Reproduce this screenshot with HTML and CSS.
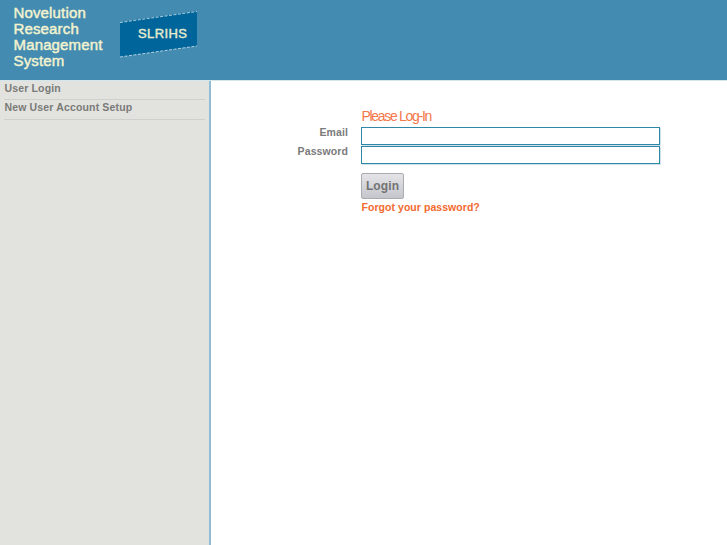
FILE: index.html
```html
<!DOCTYPE html>
<html lang="en">
<head>
<meta charset="utf-8">
<title>Novelution Research Management System</title>
<link rel="stylesheet" href="styles.css">
</head>
<body>
<header class="banner">
  <div class="brand">Novelution<br>Research<br>Management<br>System</div>
  <div class="logo">
    <svg class="logo-shape" width="78" height="47" viewBox="0 0 78 47" aria-hidden="true">
      <polygon points="0,11 77,0 77,35 0,46" fill="#00659b"/>
      <path d="M0 11.5 L77 0.5 M0 46 L77 35" stroke="#d8e8ee" stroke-width="1" stroke-dasharray="3 1.5" fill="none" opacity="0.8"/>
    </svg>
    <span class="logo-text">SLRIHS</span>
  </div>
</header>
<div class="body-row">
  <nav class="side">
    <a class="side-item first">User Login</a>
    <a class="side-item">New User Account Setup</a>
  </nav>
  <main class="main">
    <form class="form">
      <div class="title">Please Log-In</div>
      <div class="row"><label class="lbl">Email</label><input class="inp" type="text"></div>
      <div class="row"><label class="lbl">Password</label><input class="inp" type="password"></div>
      <button class="btn" type="button">Login</button>
      <a class="forgot">Forgot your password?</a>
    </form>
  </main>
</div>
</body>
</html>
```
FILE: styles.css
```css
* { box-sizing: border-box; }
html, body { margin: 0; height: 100%; }
body {
  display: flex;
  flex-direction: column;
  height: 545px;
  overflow: hidden;
  background: #fff;
  font-family: "Liberation Sans", sans-serif;
}
.banner {
  height: 81px;
  flex: none;
  background: #438bb0;
  border-bottom: 1px solid #d5e5ec;
  display: flex;
  padding: 5px 0 0 13.5px;
}
.brand {
  width: 106.5px;
  font-size: 15px;
  line-height: 16px;
  letter-spacing: 0.15px;
  color: #f3f3cf;
  -webkit-text-stroke: 0.45px #f3f3cf;
}
.logo {
  position: relative;
  width: 78px;
  height: 47px;
  margin-top: 6px;
}
.logo-shape { display: block; }
.logo-text {
  position: absolute;
  left: 18px;
  top: 15px;
  font-size: 13px;
  line-height: 16px;
  letter-spacing: 0.4px;
  color: #e8efcf;
  -webkit-text-stroke: 0.4px #e8efcf;
}
.body-row { flex: 1; display: flex; min-height: 0; }
.side {
  width: 211px;
  flex: none;
  background: #e2e3de;
  border-right: 2px solid #8fbdd3;
  padding: 0 4px 0 4px;
}
.side-item {
  display: block;
  height: 20px;
  padding-left: 0.5px;
  font-size: 10.5px;
  line-height: 15px;
  font-weight: 700;
  letter-spacing: 0.15px;
  color: #7a7a78;
  border-bottom: 1px solid #cfd0cb;
}
.side-item.first { height: 19px; }
.main { flex: 1; padding: 26px 0 0 0; }
.form { display: flex; flex-direction: column; padding-left: 150px; width: 449px; position: relative; }
.title {
  font-size: 14px;
  line-height: 18px;
  letter-spacing: -1.3px;
  color: #f4774a;
  padding-left: 0.5px;
  margin-bottom: 2px;
}
.row { position: relative; height: 18px; margin-bottom: 1px; }
.lbl {
  position: absolute;
  right: 100%;
  margin-right: 13px;
  top: -2px;
  font-size: 10.5px;
  line-height: 15px;
  font-weight: 700;
  letter-spacing: 0.1px;
  color: #7a7a7a;
  white-space: nowrap;
}
.inp {
  display: block;
  width: 299px;
  height: 18px;
  padding: 0;
  margin: 0;
  background: #fff;
  border: 1px solid #2f86a6;
  border-radius: 0;
  outline: none;
  box-shadow: 1px 1px 0 #cfe3ea;
}
.btn {
  align-self: flex-start;
  width: 43px;
  height: 26px;
  margin-top: 8px;
  padding: 0;
  border: 1px solid #a9abaf;
  border-radius: 2px;
  background: linear-gradient(#e4e4e8, #c5c6cc);
  font-family: "Liberation Sans", sans-serif;
  font-size: 12px;
  font-weight: 700;
  letter-spacing: 0.1px;
  color: #737373;
}
.forgot {
  margin-top: 1px;
  padding-left: 0.5px;
  font-size: 10.5px;
  line-height: 15px;
  font-weight: 700;
  letter-spacing: 0.05px;
  color: #f26a2e;
  white-space: nowrap;
}
```
